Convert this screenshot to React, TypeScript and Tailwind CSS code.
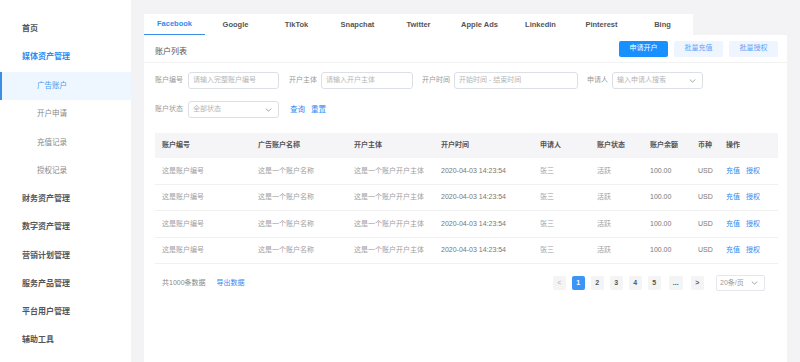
import React from "react";

const menu = [
  { label: "首页", top: true },
  { label: "媒体资产管理", top: true, active: true },
  { label: "广告账户", current: true },
  { label: "开户申请" },
  { label: "充值记录" },
  { label: "授权记录" },
  { label: "财务资产管理", top: true },
  { label: "数字资产管理", top: true },
  { label: "营销计划管理", top: true },
  { label: "服务产品管理", top: true },
  { label: "平台用户管理", top: true },
  { label: "辅助工具", top: true },
];

const tabs = ["Facebook", "Google", "TikTok", "Snapchat", "Twitter", "Apple Ads", "Linkedin", "Pinterest", "Bing"];

const cols = [
  { title: "账户编号", w: "w-[96px]" },
  { title: "广告账户名称", w: "w-[96px]" },
  { title: "开户主体", w: "w-[87px]" },
  { title: "开户时间", w: "w-[99px]" },
  { title: "申请人", w: "w-[57px]" },
  { title: "账户状态", w: "w-[53px]" },
  { title: "账户余额", w: "w-[48px]" },
  { title: "币种", w: "w-[28px]" },
  { title: "操作", w: "w-[59px]" },
];

const Chevron = () => (
  <svg width="7" height="5" viewBox="0 0 7 5" className="absolute right-[6px] top-1/2 -translate-y-1/2">
    <path d="M0.8 1 L3.5 3.7 L6.2 1" fill="none" stroke="#999" strokeWidth="0.9" />
  </svg>
);

const Field = ({ placeholder, w, select }: { placeholder: string; w: string; select?: boolean }) => (
  <div className={`relative ${w} h-[17px] border border-[#dcdfe6] rounded-[3px] flex items-center pl-[4px] text-[7px] text-[#b5b5b5]`}>
    {placeholder}
    {select && <Chevron />}
  </div>
);

const Label = ({ children, w }: { children: React.ReactNode; w: string }) => (
  <span className={`${w} shrink-0 text-[7px] text-[#999]`}>{children}</span>
);

const App = () => {
  return (
    <div className="flex w-[800px] h-[362px] overflow-hidden bg-[#f3f3f6] font-['Liberation_Sans','Noto_Sans_CJK_SC',sans-serif]">
      <aside className="w-[131px] bg-white pt-[15px] shrink-0">
        {menu.map((m) => (
          <div
            key={m.label}
            className={`h-[28.3px] flex items-center ${
              m.current ? "bg-[#eef6ff] border-l-2 border-[#3a8ee6] pl-[35px] text-[#4a9af0]" : m.top ? "pl-[22px]" : "pl-[37px] text-[#888]"
            } ${m.top ? "text-[8px] font-bold" : "text-[7.5px]"} ${m.active ? "text-[#2d8cf0]" : m.top ? "text-[#555]" : ""}`}
          >
            {m.label}
          </div>
        ))}
      </aside>

      <main className="flex-1 flex flex-col pl-[13px] pr-[13px] pt-[14px]">
        <div className="flex w-[549px] h-[21px] bg-white">
          {tabs.map((t, i) => (
            <div
              key={t}
              className={`w-[61px] flex items-center justify-center text-[7.5px] font-bold ${
                i === 0 ? "text-[#2d8cf0] border-b-[1.5px] border-[#3a8ee6]" : "text-[#555]"
              }`}
            >
              {t}
            </div>
          ))}
        </div>

        <div className="flex-1 bg-white">
          <div className="h-[28px] flex items-center justify-between pl-[11px] pr-[9px] border-b border-[#f2f2f2]">
            <span className="mt-[7px] text-[8px] text-[#555]">账户列表</span>
            <div className="flex gap-[6px]">
              <button className="w-[49px] h-[16px] rounded-[2px] bg-[#1890ff] text-white text-[7px]">申请开户</button>
              <button className="w-[49px] h-[16px] rounded-[2px] bg-[#eef5ff] text-[#5aa2f7] text-[7px]">批量充值</button>
              <button className="w-[49px] h-[16px] rounded-[2px] bg-[#eef5ff] text-[#5aa2f7] text-[7px]">批量授权</button>
            </div>
          </div>

          <div className="pl-[11px] pr-[9px] pt-[9px]">
            <div className="flex items-center">
              <Label w="w-[33px]">账户编号</Label>
              <Field w="w-[91px]" placeholder="请输入完整账户编号" />
              <span className="w-[10px] shrink-0" />
              <Label w="w-[32px]">开户主体</Label>
              <Field w="w-[92px]" placeholder="请输入开户主体" />
              <span className="w-[9px] shrink-0" />
              <Label w="w-[32px]">开户时间</Label>
              <Field w="w-[124px]" placeholder="开始时间 - 结束时间" />
              <span className="w-[9px] shrink-0" />
              <Label w="w-[25px]">申请人</Label>
              <Field w="w-[91px]" placeholder="输入申请人搜索" select />
            </div>
            <div className="flex items-center mt-[12px]">
              <Label w="w-[33px]">账户状态</Label>
              <Field w="w-[91px]" placeholder="全部状态" select />
              <span className="ml-[11px] text-[7.5px] text-[#2d8cf0]">查询</span>
              <span className="ml-[6px] text-[7.5px] text-[#2d8cf0]">重置</span>
            </div>

            <div className="mt-[15px]">
              <div className="flex h-[25px] items-center bg-[#f5f4f7]">
                {cols.map((c) => (
                  <div key={c.title} className={`${c.w} pl-[7px] text-[7px] font-bold text-[#555]`}>
                    {c.title}
                  </div>
                ))}
              </div>
              {[0, 1, 2, 3].map((r) => (
                <div key={r} className="flex h-[26.5px] items-center border-b border-[#f0f0f0] text-[7px]">
                  <div className="w-[96px] pl-[7px] text-[#a0a0a0]">这是账户编号</div>
                  <div className="w-[96px] pl-[7px] text-[#a0a0a0]">这是一个账户名称</div>
                  <div className="w-[87px] pl-[7px] text-[#a0a0a0]">这是一个账户开户主体</div>
                  <div className="w-[99px] pl-[7px] text-[#777]">2020-04-03 14:23:54</div>
                  <div className="w-[57px] pl-[7px] text-[#a0a0a0]">张三</div>
                  <div className="w-[53px] pl-[7px] text-[#a0a0a0]">活跃</div>
                  <div className="w-[48px] pl-[7px] text-[#777]">100.00</div>
                  <div className="w-[28px] pl-[7px] text-[#777]">USD</div>
                  <div className="w-[59px] pl-[7px] flex gap-[6px] text-[#2d8cf0]">
                    <span>充值</span>
                    <span>授权</span>
                  </div>
                </div>
              ))}
            </div>

            <div className="flex items-center justify-between mt-[11px] pl-[7px] pr-[13px]">
              <div className="flex items-center text-[7px]">
                <span className="text-[#888]">共1000条数据</span>
                <span className="ml-[11px] text-[#2d8cf0]">导出数据</span>
              </div>
              <div className="flex items-center">
                <div className="flex gap-[5.5px]">
                  {["<", "1", "2", "3", "4", "5", "...", ">"].map((p, i) => (
                    <div
                      key={i}
                      className={`w-[13.5px] h-[14px] rounded-[2px] flex items-center justify-center text-[7px] font-bold ${
                        p === "1" ? "bg-[#3a95f7] text-white" : p === "<" ? "bg-[#f4f4f5] text-[#c0c4cc]" : "bg-[#f4f4f5] text-[#555]"
                      } ${p === "..." || p === ">" ? "ml-[2.5px]" : ""}`}
                    >
                      {p}
                    </div>
                  ))}
                </div>
                <div className="relative ml-[12px] w-[49px] h-[16px] border border-[#e4e7ed] rounded-[2px] flex items-center pl-[3px] text-[7px] text-[#999]">
                  20条/页
                  <Chevron />
                </div>
              </div>
            </div>
          </div>
        </div>
      </main>
    </div>
  );
};

export default App;
